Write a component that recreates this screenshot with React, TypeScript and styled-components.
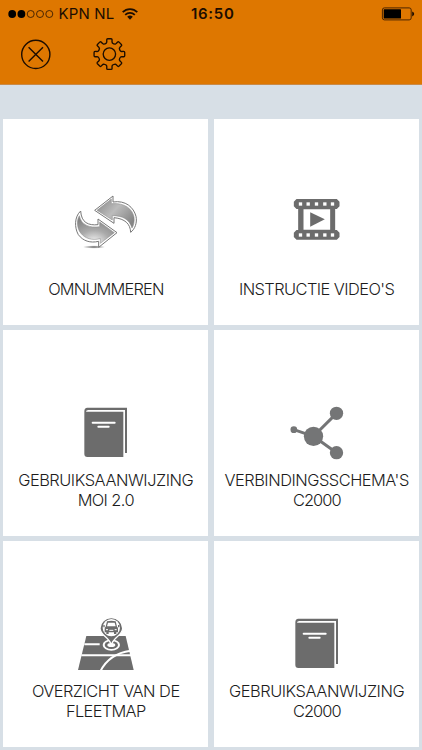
import React from "react";
import styled, { createGlobalStyle } from "styled-components";

const GlobalStyle = createGlobalStyle`
  * { box-sizing: border-box; }
  body { margin: 0; background: #d7dfe6; }
  svg { display: block; overflow: visible; }
`;

const Screen = styled.div`
  width: 422px;
  height: 750px;
  overflow: hidden;
  background: #d7dfe6;
  font-family: "Inter", "Liberation Sans", sans-serif;
  color: #1c1c1c;
`;

const Header = styled.header`
  height: 85px;
  background: #de7700;
  border-bottom: 1px solid #c98a48;
  color: #1c0d00;
`;

const StatusBar = styled.div`
  height: 28px;
  padding: 0 8px 0 8px;
  display: grid;
  grid-template-columns: 1fr auto 1fr;
  align-items: center;
`;

const Carrier = styled.div`
  display: flex;
  align-items: center;
  font-size: 15px;
  line-height: 28px;
`;

const CarrierName = styled.span`
  margin: 0 8px 0 4.5px;
  letter-spacing: 0.15px;
`;

const Clock = styled.div`
  padding-left: 3.5px;
  font-size: 15px;
  font-weight: 600;
  letter-spacing: 0.7px;
  line-height: 28px;
`;

const BatterySlot = styled.div`
  display: flex;
  justify-content: flex-end;
`;

const Toolbar = styled.nav`
  display: flex;
  gap: 39px;
  padding: 9px 19px 0;
`;

const ToolButton = styled.button`
  width: 34px;
  height: 34px;
  padding: 0;
  border: 0;
  background: none;
  color: inherit;
`;

const Tiles = styled.main`
  display: grid;
  grid-template-columns: 205.6px 205.6px;
  grid-auto-rows: 205.8px;
  gap: 5.3px;
  padding: 34px 2.7px 0;
`;

const Tile = styled.section`
  background: #fff;
  display: flex;
  flex-direction: column;
  align-items: center;
  justify-content: flex-end;
  padding-bottom: 26px;
`;

const TileIcon = styled.svg`
  width: 90px;
  height: 86px;
  margin-left: 1.4px;
  flex: none;
`;

const Label = styled.div`
  display: flex;
  flex-direction: column;
  align-items: center;
`;

const Line = styled.span<{ $spacing: number }>`
  font-size: 16.4px;
  font-weight: 300;
  line-height: 20px;
  white-space: nowrap;
  letter-spacing: ${(p) => p.$spacing}px;
  margin-right: ${(p) => p.$spacing}px;
`;

const GRAY = "#6c6c6c";

const SignalDots = () => (
  <svg width="46" height="10" viewBox="0 0 46 10">
    {[4.2, 13.4, 22.7, 32, 41.3].map((x, i) => (
      <circle key={x} cx={x} cy="5" r={i < 2 ? 3.9 : 3.5} fill={i < 2 ? "#000" : "none"} stroke="#271100" strokeWidth={i < 2 ? 0 : 0.8} />
    ))}
  </svg>
);

const Wifi = () => (
  <svg width="16" height="12" viewBox="0 0 16 12" fill="none" stroke="#1c0d00" strokeWidth="1.8">
    <path d="M.7 4.2C4.8.1 11.2.1 15.3 4.2M3.2 6.9C5.9 4.3 10.1 4.3 12.8 6.9" />
    <path d="M5.2 8.8Q8 6.4 10.8 8.8L8 11.7Z" fill="#1c0d00" stroke="none" />
  </svg>
);

const Battery = () => (
  <svg width="32" height="14" viewBox="0 0 32 14">
    <rect x=".4" y=".9" width="28.8" height="12" rx="2" fill="none" stroke="#3b1c00" strokeWidth=".9" />
    <rect x="1.7" y="2.3" width="17.3" height="9.2" rx=".5" fill="#000" />
    <path d="M30.2 4.6Q32.2 5.5 32.2 7T30.2 9.4Z" fill="#1c0d00" />
  </svg>
);

const CloseIcon = () => (
  <svg width="34" height="34" viewBox="0 0 34 34" fill="none" stroke="currentColor" strokeWidth="1.4">
    <circle cx="16.8" cy="17.4" r="14.1" />
    <path d="M9.6 10.2l14.4 14.4M24 10.2L9.6 24.6" />
  </svg>
);

const GearIcon = () => {
  const polar = (r: number, deg: number) => {
    const a = (deg * Math.PI) / 180;
    return `${(17 + r * Math.sin(a)).toFixed(2)} ${(17 - r * Math.cos(a)).toFixed(2)}`;
  };
  const points = Array.from({ length: 8 }, (_, i) => {
    const a = i * 45;
    return `${i ? "L" : "M"}${polar(11.5, a - 15)}L${polar(12.6, a - 12)}L${polar(14.6, a - 10.5)}Q${polar(15.5, a - 10)} ${polar(15.4, a - 6)}L${polar(15.4, a + 6)}Q${polar(15.5, a + 10)} ${polar(14.6, a + 10.5)}L${polar(12.6, a + 12)}L${polar(11.5, a + 15)}Q${polar(10.9, a + 22.5)} ${polar(11.5, a + 30)}`;
  }).join("");
  return (
    <svg width="34" height="34" viewBox="-.4 -.1 34 34" fill="none" stroke="currentColor" strokeWidth="1.35" strokeLinejoin="round">
      <path d={`${points}Z`} />
      <circle cx="17" cy="17" r="6.2" />
    </svg>
  );
};

const SwapArrows = () => (
  <TileIcon viewBox="2 39 270 258">
    <defs>
      <linearGradient id="upper" x1="0" x2="1" y1="0" y2=".7">
        <stop offset="0" stopColor="#858585" />
        <stop offset=".5" stopColor="#bcbcbc" />
        <stop offset="1" stopColor="#858585" />
      </linearGradient>
      <radialGradient id="lower" cx=".45" cy=".95" r=".85">
        <stop offset="0" stopColor="#f4f4f4" />
        <stop offset=".5" stopColor="#aaa" />
        <stop offset="1" stopColor="#858585" />
      </radialGradient>
      <radialGradient id="shade">
        <stop offset="0" stopColor="#555" />
        <stop offset="1" stopColor="#777" stopOpacity="0" />
      </radialGradient>
    </defs>
    <ellipse cx="101" cy="201" rx="34" ry="5" fill="url(#shade)" />
    <g strokeLinejoin="round">
      <path d="M103 91L158 48V66C196 60 220 82 227 109C231 128 224 147 211 157C210 132 194 116 161 113V130Z" fill="#fff" stroke="#777" strokeWidth="3" />
      <path d="M110 91L153 57V71C195 67 217 89 221 111C223 124 220 137 215 144C207 117 186 107 156 107V120Z" fill="url(#upper)" stroke="#858585" strokeWidth="1.5" />
      <path d="M61 93C42 110 42 143 54 164C68 183 90 190 115 184V202L170 158L113 117V134C84 137 63 128 61 93Z" fill="#fff" stroke="#777" strokeWidth="3" />
      <path d="M57 107C48 121 50 145 61 159C74 176 95 182 120 176V190L162 158L118 126V140C88 144 63 136 57 107Z" fill="url(#lower)" stroke="#858585" strokeWidth="1.5" />
    </g>
  </TileIcon>
);

const FilmStrip = () => (
  <TileIcon viewBox="-25.5 24 270 258">
    <path fill={GRAY} fillRule="evenodd" d="M48 42H169L177 50V64L169 72H164V135H169L177 143V156L169 164H48L40 156V143L48 135H53V72H48L40 64V50ZM69 73H149V134H69Z" />
    <path fill={GRAY} d="M89 82L133 103L89 125Z" />
    <g fill="#fff">
      {[56, 79, 104, 129, 152].map((x) => (
        <React.Fragment key={x}>
          <rect x={x - 1} y="52" width="10" height="10" />
          <rect x={x - 1} y="145" width="10" height="10" />
        </React.Fragment>
      ))}
    </g>
  </TileIcon>
);

const Book = () => (
  <TileIcon viewBox="-28 -33 270 258">
    <path fill={GRAY} d="M51 38H170V174H164V45H54Q47 45 47 50H159V186H51Q42 186 42 177V49Q42 38 51 38Z" />
    <path d="M67 83H133M84 95H115" stroke="#fff" strokeWidth="6" strokeLinecap="round" />
  </TileIcon>
);

const Network = () => (
  <TileIcon viewBox="-25.5 -33 270 258">
    <path d="M40 104L99 124L168 55M99 124L168 173" fill="none" stroke="#747576" strokeWidth="9" />
    <g fill="#747576">
      <circle cx="40" cy="104" r="10" />
      <circle cx="99" cy="124" r="29" />
      <circle cx="168" cy="55" r="20" />
      <circle cx="168" cy="173" r="20" />
    </g>
  </TileIcon>
);

const FleetMap = () => (
  <TileIcon viewBox="-28 -45 270 258">
    <path d="M48 78H166L190 180H23Z" fill={GRAY} />
    <path d="M42 103H88M33 136H183" stroke="#fff" strokeWidth="6" fill="none" />
    <path d="M90 184Q116 131 181 122" stroke="#fff" strokeWidth="6" fill="none" />
    <ellipse cx="123" cy="105" rx="26" ry="17" fill="#fff" />
    <ellipse cx="123" cy="105" rx="20" ry="12" fill={GRAY} />
    <ellipse cx="123" cy="105" rx="12" ry="6" fill="#fff" />
    <path d="M123 106C118 81 89 77 89 55A34 32 0 0 1 157 55C157 77 128 81 123 106Z" fill={GRAY} stroke="#fff" strokeWidth="4" />
    <circle cx="123" cy="53" r="26" fill="#fff" />
    <path fill={GRAY} d="M110 34Q123 31 136 34L140 50Q143 52 143 56V67H138V72H131V67H115V72H108V67H103V56Q103 52 106 50ZM113 38L110 49H136L133 38Z" fillRule="evenodd" />
    <path d="M101 45V52M145 45V52" stroke={GRAY} strokeWidth="4" />
    <path d="M107 59H113M133 59H139M117 61H129" stroke="#fff" strokeWidth="3" />
  </TileIcon>
);

type Item = { icon: React.ComponentType; lines: [string, number][] };

const items: Item[] = [
  { icon: SwapArrows, lines: [["OMNUMMEREN", -0.82]] },
  { icon: FilmStrip, lines: [["INSTRUCTIE VIDEO'S", -0.56]] },
  { icon: Book, lines: [["GEBRUIKSAANWIJZING", -0.47], ["MOI 2.0", -0.6]] },
  { icon: Network, lines: [["VERBINDINGSSCHEMA'S", -0.48], ["C2000", -0.95]] },
  { icon: FleetMap, lines: [["OVERZICHT VAN DE", -0.53], ["FLEETMAP", -0.67]] },
  { icon: Book, lines: [["GEBRUIKSAANWIJZING", -0.47], ["C2000", -0.95]] },
];

export default function App() {
  return (
    <Screen>
      <GlobalStyle />
      <Header>
        <StatusBar>
          <Carrier>
            <SignalDots />
            <CarrierName>KPN NL</CarrierName>
            <Wifi />
          </Carrier>
          <Clock>16:50</Clock>
          <BatterySlot><Battery /></BatterySlot>
        </StatusBar>
        <Toolbar>
          <ToolButton aria-label="Sluiten"><CloseIcon /></ToolButton>
          <ToolButton aria-label="Instellingen"><GearIcon /></ToolButton>
        </Toolbar>
      </Header>
      <Tiles>
        {items.map(({ icon: Icon, lines }, i) => (
          <Tile key={i}>
            <Icon />
            <Label>
              {lines.map(([text, spacing]) => (
                <Line key={text} $spacing={spacing}>{text}</Line>
              ))}
            </Label>
          </Tile>
        ))}
      </Tiles>
    </Screen>
  );
}
